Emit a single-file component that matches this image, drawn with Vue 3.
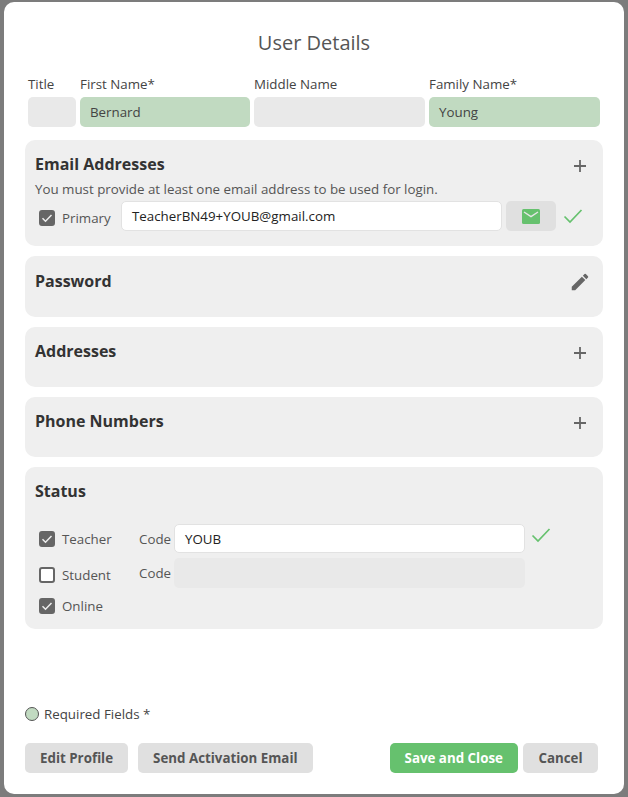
<template>
  <div class="backdrop">
    <div class="modal">
      <h1 class="heading">User Details</h1>

      <div class="name-row">
        <div v-for="f in nameFields" :key="f.label" class="name-field" :class="f.cls">
          <label>{{ f.label }}</label>
          <div class="input" :class="{ required: f.required }">{{ f.value }}</div>
        </div>
      </div>

      <section class="panel email">
        <div class="panel-head">
          <h2>Email Addresses</h2>
          <svg class="act plus" viewBox="0 0 14 14"><path d="M7 1v12M1 7h12" /></svg>
        </div>
        <p class="hint">You must provide at least one email address to be used for login.</p>
        <div class="email-row">
          <span class="check on low"><svg viewBox="0 0 16 16"><path d="M3.5 8.2l3 3 6-6.2" /></svg></span>
          <span class="check-label primary low">Primary</span>
          <div class="input white email-input">TeacherBN49+YOUB@gmail.com</div>
          <button class="mail-btn" type="button">
            <svg viewBox="0 0 18 15"><rect width="18" height="15" rx="1.5" fill="#66c16e" /><path d="M2 3l7 4.6L16 3" fill="none" stroke="#e6e6e6" stroke-width="1.4" /></svg>
          </button>
          <svg class="tick" viewBox="0 0 20 16"><path d="M1.5 8.5l5.5 5.5L18.5 2" /></svg>
        </div>
      </section>

      <section class="panel short password">
        <div class="panel-head">
          <h2>Password</h2>
          <svg class="act pencil" viewBox="0 0 24 24"><path d="M3 17.25V21h3.75L17.81 9.94l-3.75-3.75L3 17.25zM20.71 7.04a1 1 0 0 0 0-1.41l-2.34-2.34a1 1 0 0 0-1.41 0l-1.83 1.83 3.75 3.75 1.83-1.83z" /></svg>
        </div>
      </section>

      <section class="panel short">
        <div class="panel-head">
          <h2>Addresses</h2>
          <svg class="act plus" viewBox="0 0 14 14"><path d="M7 1v12M1 7h12" /></svg>
        </div>
      </section>

      <section class="panel short">
        <div class="panel-head">
          <h2>Phone Numbers</h2>
          <svg class="act plus" viewBox="0 0 14 14"><path d="M7 1v12M1 7h12" /></svg>
        </div>
      </section>

      <section class="panel status">
        <h2>Status</h2>
        <div class="status-row teacher">
          <span class="check on"><svg viewBox="0 0 16 16"><path d="M3.5 8.2l3 3 6-6.2" /></svg></span>
          <span class="check-label role">Teacher</span>
          <span class="code-label">Code</span>
          <div class="input white code-input">YOUB</div>
          <svg class="tick" viewBox="0 0 20 16"><path d="M1.5 8.5l5.5 5.5L18.5 2" /></svg>
        </div>
        <div class="status-row student">
          <span class="check low"></span>
          <span class="check-label role low">Student</span>
          <span class="code-label">Code</span>
          <div class="input code-input"></div>
        </div>
        <div class="status-row online">
          <span class="check on"><svg viewBox="0 0 16 16"><path d="M3.5 8.2l3 3 6-6.2" /></svg></span>
          <span class="check-label role">Online</span>
        </div>
      </section>

      <div class="legend">
        <span class="dot"></span>
        <span>Required Fields *</span>
      </div>

      <div class="actions">
        <button class="btn" type="button">Edit Profile</button>
        <button class="btn" type="button">Send Activation Email</button>
        <button class="btn save" type="button">Save and Close</button>
        <button class="btn cancel" type="button">Cancel</button>
      </div>
    </div>
  </div>
</template>

<script setup>
const nameFields = [
  { label: 'Title', value: '', cls: 'w-title' },
  { label: 'First Name*', value: 'Bernard', required: true, cls: 'w-first' },
  { label: 'Middle Name', value: '', cls: 'w-middle' },
  { label: 'Family Name*', value: 'Young', required: true, cls: 'w-family' }
]
</script>

<style>
html, body {
  margin: 0;
  background: #7c7c7c;
}
</style>

<style scoped>
.backdrop {
  width: 628px;
  height: 797px;
  padding: 2px 4px 3px;
  box-sizing: border-box;
  background: #7c7c7c;
  font-family: "Open Sans", sans-serif;
  color: #444;
  overflow: hidden;
}

.modal {
  height: 792px;
  box-sizing: border-box;
  background: #fff;
  border-radius: 10px;
  padding: 0 21px;
  display: flex;
  flex-direction: column;
}

.heading {
  margin: 27px 0 0;
  font-size: 20px;
  line-height: 27px;
  font-weight: 400;
  text-align: center;
  color: #555;
}

.name-row {
  display: flex;
  gap: 4px;
  margin: 19px 0 0 3px;
}

.name-field label {
  display: block;
  font-size: 13.33px;
  line-height: 18px;
  height: 22px;
  color: #444;
}

.w-title { width: 48px; }
.w-first { width: 170px; }
.w-middle { width: 171px; }
.w-family { width: 171px; }

.input {
  height: 30px;
  box-sizing: border-box;
  background: #e9e9e9;
  border-radius: 5px;
  padding: 0 10px;
  font-size: 13.33px;
  line-height: 30px;
  color: #444;
}

.input.required {
  background: #c1dac1;
}

.input.white {
  background: #fff;
  border: 1px solid #e2e2e2;
  line-height: 29px;
  color: #222;
}

.panel {
  background: #efefef;
  border-radius: 10px;
  padding: 0 10px;
  margin-top: 10px;
}

.panel h2 {
  margin: 0;
  font-size: 16px;
  line-height: 22px;
  font-weight: 700;
  color: #333;
}

.panel-head {
  display: flex;
  justify-content: space-between;
  align-items: center;
  height: 22px;
}

.email {
  height: 106px;
  margin-top: 13px;
  padding-top: 13px;
  box-sizing: border-box;
}

.short {
  height: 60px;
  padding-top: 13px;
  box-sizing: border-box;
}

.password {
  height: 61px;
  padding-top: 14px;
}

.act {
  display: block;
  flex: none;
}

.plus {
  width: 14px;
  height: 14px;
  margin: 4px 6px 0 0;
  fill: none;
  stroke: #666;
  stroke-width: 1.8;
}

.pencil {
  width: 22px;
  height: 22px;
  margin: 2px 2px 0 0;
  fill: #666;
}

.hint {
  margin: 5px 0 0;
  font-size: 13.33px;
  line-height: 18px;
  color: #555;
}

.email-row {
  display: flex;
  align-items: center;
  margin-top: 3px;
  padding-left: 4px;
}

.check {
  width: 16px;
  height: 16px;
  flex: none;
  box-sizing: border-box;
  border: 2px solid #666;
  border-radius: 3px;
  background: #fff;
}

.check.on {
  background: #666;
}

.check svg {
  display: block;
  width: 16px;
  height: 16px;
  margin: -2px;
  fill: none;
  stroke: #eee;
  stroke-width: 1.5;
}

.low {
  margin-top: 4px;
}

.check-label {
  font-size: 13.33px;
  color: #555;
  margin-left: 7px;
}

.primary {
  width: 59px;
  flex: none;
}

.email-input {
  width: 381px;
  flex: none;
  padding: 0 10px;
}

.mail-btn {
  width: 50px;
  height: 30px;
  flex: none;
  margin-left: 4px;
  border: 0;
  padding: 0;
  border-radius: 5px;
  background: #e0e0e0;
  display: flex;
  align-items: center;
  justify-content: center;
}

.mail-btn svg {
  width: 18px;
  height: 15px;
}

.tick {
  width: 20px;
  height: 16px;
  flex: none;
  margin-left: 7px;
  fill: none;
  stroke: #66c16e;
  stroke-width: 1.7;
}

.status {
  height: 162px;
  box-sizing: border-box;
  padding-top: 13px;
}

.status-row {
  display: flex;
  align-items: center;
  padding-left: 4px;
}

.role {
  width: 77px;
  flex: none;
}

.code-label {
  font-size: 13.33px;
  color: #555;
  width: 35px;
  flex: none;
}

.code-input {
  width: 351px;
  flex: none;
}

.teacher {
  margin-top: 22px;
}

.teacher .code-input {
  height: 29px;
  line-height: 28px;
}

.teacher .tick {
  margin-top: -7px;
  margin-left: 6px;
}

.student {
  margin-top: 5px;
}

.online {
  margin-top: 3px;
  height: 30px;
}

.legend {
  display: flex;
  align-items: center;
  gap: 5px;
  margin-top: auto;
  font-size: 13.33px;
  line-height: 16px;
  color: #444;
}

.dot {
  width: 14px;
  height: 14px;
  box-sizing: border-box;
  border: 1px solid #555;
  border-radius: 50%;
  background: #c1dac1;
}

.actions {
  display: flex;
  gap: 10px;
  margin: 21px 5px 21px 0;
}

.btn {
  height: 30px;
  border: 0;
  border-radius: 5px;
  padding: 0 15px;
  background: #e0e0e0;
  font-family: inherit;
  font-size: 13.33px;
  font-weight: 700;
  color: #555;
}

.btn.save {
  margin-left: auto;
  margin-right: -5px;
  background: #66c16e;
  color: #fff;
}

.btn.cancel {
  padding: 0 15.5px;
}
</style>
